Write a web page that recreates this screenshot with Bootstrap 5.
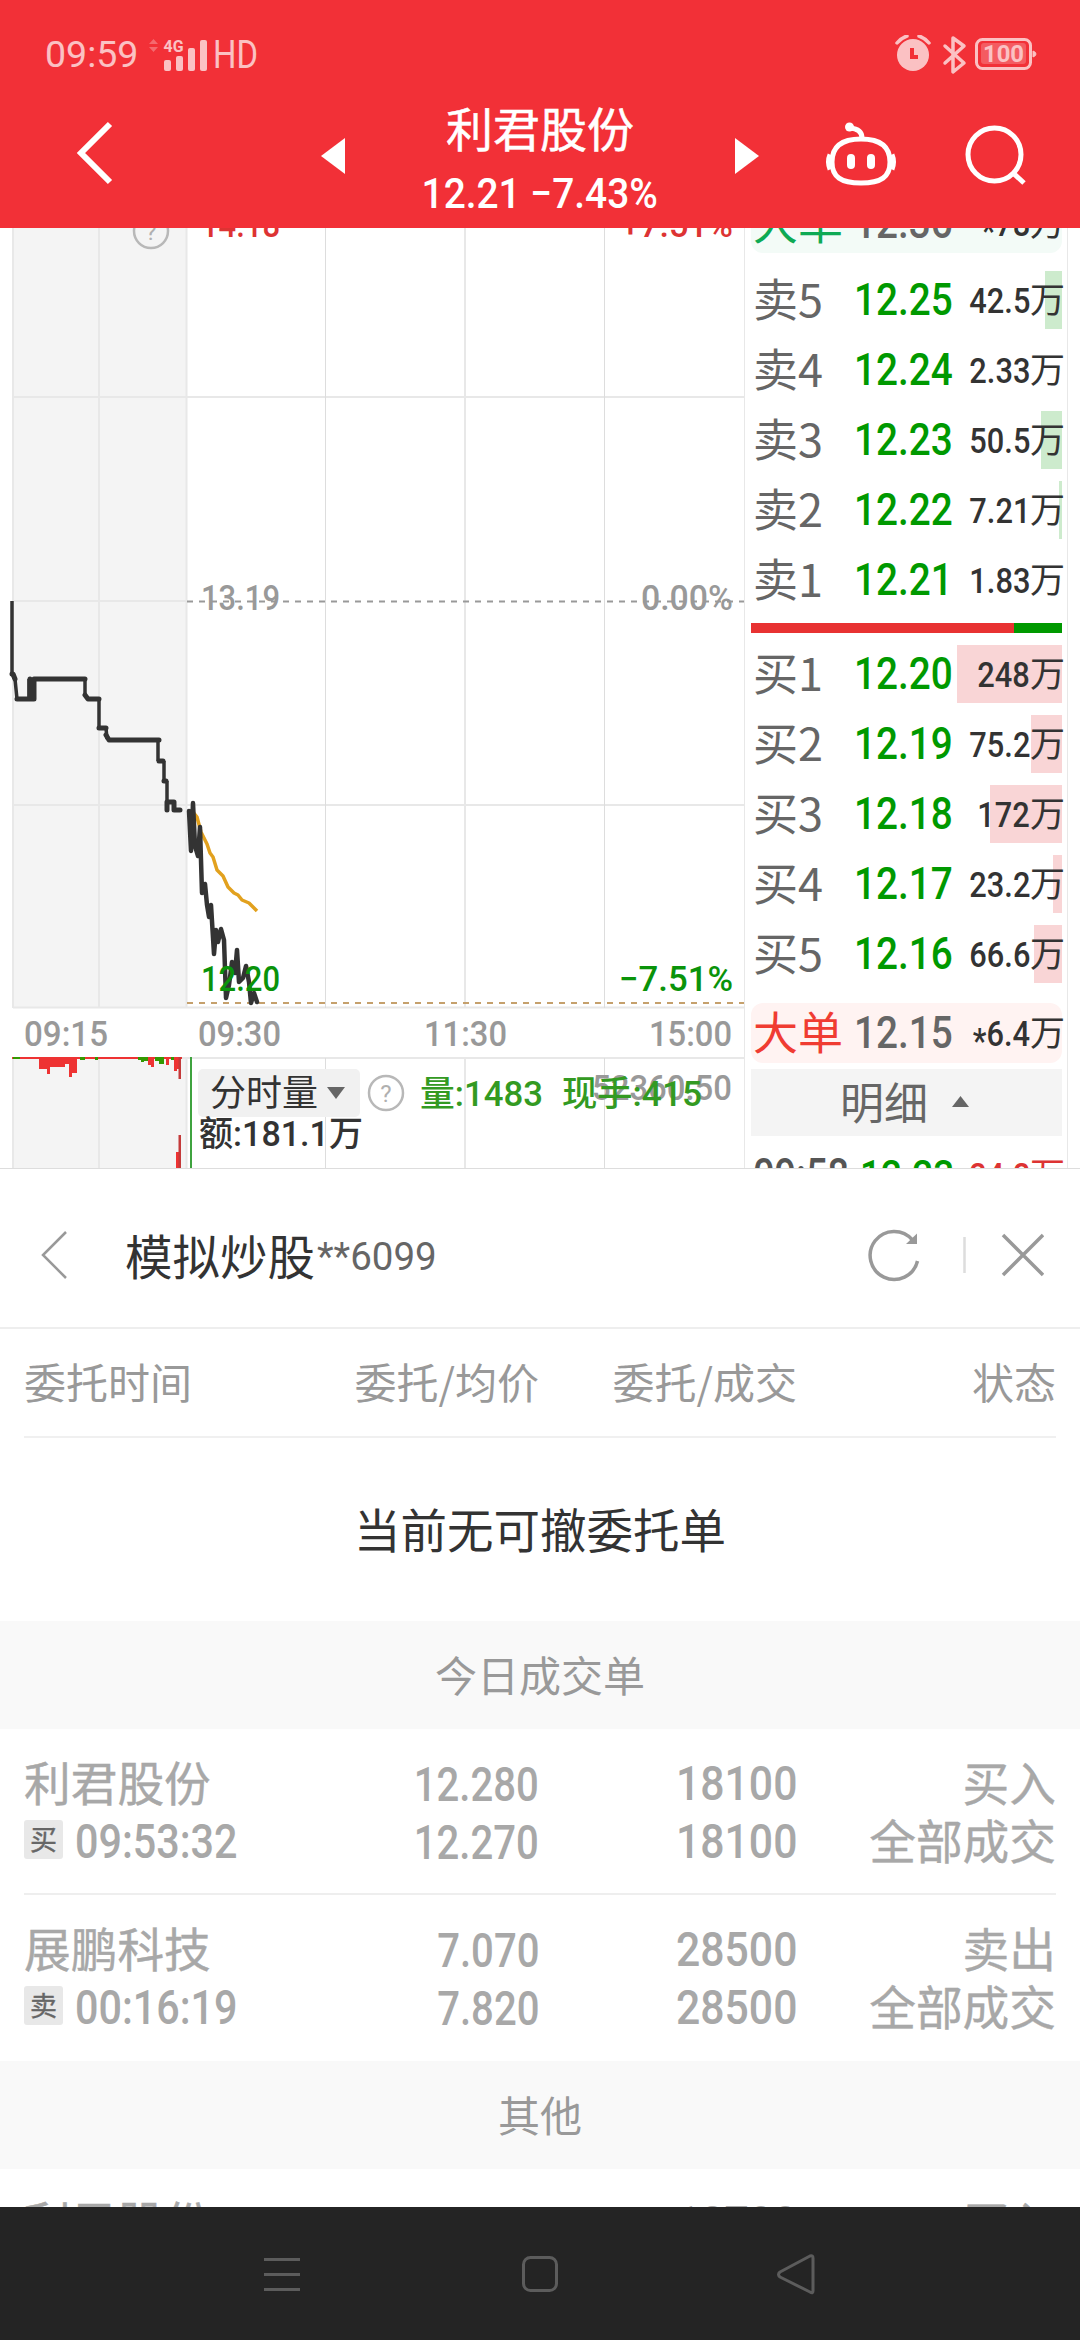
<!DOCTYPE html>
<html lang="zh-CN">
<head>
<meta charset="utf-8">
<meta name="viewport" content="width=device-width, initial-scale=1">
<title>利君股份</title>
<link href="https://cdn.jsdelivr.net/npm/bootstrap@5.3.0/dist/css/bootstrap.min.css" rel="stylesheet">
<style>
  body { width: 1080px; height: 2340px; overflow: hidden; background: #fff; color: #333;
    font-family: Roboto, "Noto Sans CJK SC", sans-serif; line-height: 1; }
  svg { display: block; flex: none; }
  .cn { font-family: "Noto Sans CJK SC", sans-serif; }
  .din { display: inline-block; font-weight: 500; transform: scaleX(.88); transform-origin: right; white-space: nowrap; }
  .din-start { transform-origin: left; }
  .app-head { height: 228px; background: #f23037; color: #fff; }
  .statusbar { height: 110px; padding: 0 43px 0 45px; opacity: .7; }
  .clock { font-size: 37.5px; }
  .titlebar { height: 118px; }
  .stock-name { font-size: 47px; height: 36px; line-height: 33px; -webkit-text-stroke: .5px; }
  .stock-quote { font-size: 42px; height: 30px; line-height: 30px; margin-top: 33px; }
  .stock-quote .din { transform: scaleX(.925); transform-origin: center; }
  .market { height: 941px; border-bottom: 1px solid #ddd; overflow: hidden; }
  .book { width: 324px; padding: 0 5px 0 6px; border-left: 1px solid #e8e8e8; border-right: 1px solid #e8e8e8; margin-left: -1px; }
  .lvl { height: 70px; padding-left: 2px; }
  .lvl-name { width: 101px; font-size: 45px; line-height: 54px; height: 58px; color: #666; white-space: nowrap; }
  .lvl-price { width: 97px; font-size: 45px; line-height: 58px; color: #090; }
  .lvl-price .din { transform: scaleX(.86); }
  .lvl-vol { height: 58px; line-height: 58px; padding-top: 2px; margin-right: -3px; font-size: 35px; color: #333; }
  .big { height: 60px; border-radius: 12px; flex: none; }
  .star { vertical-align: -7px; }
  .sellbar { background: linear-gradient(#cdebcd, #cdebcd) right 3px top 0 / var(--w) 100% no-repeat; }
  .buybar { background: linear-gradient(#f9d5d6, #f9d5d6) right 3px top 0 / var(--w) 100% no-repeat; }
  .detail { height: 67px; background: #f4f4f4; color: #666; font-size: 44px; padding-bottom: 4px; }
  .ratio { height: 10px; margin: 8px 0 6px; background: #090; }
  .panel-head { height: 160px; border-bottom: 2px solid #eee; padding: 14px 36px 0 40px; }
  .cols > :nth-child(1) { width: 330px; }
  .cols > :nth-child(2) { width: 185px; text-align: right; }
  .cols > :nth-child(3) { width: 258px; text-align: right; }
  .cols > :nth-child(4) { flex: 1; text-align: right; }
  .cols { margin: 0 24px; }
  .col-heads { height: 109px; border-bottom: 2px solid #f0f0f0; padding-bottom: 3px; font-size: 42px; color: #999; }
  .empty-msg { height: 183px; padding-bottom: 2px; font-size: 46.5px; color: #333; }
  .sect { height: 108px; padding-bottom: 2px; background: #f9f9f9; color: #999; font-size: 42px; }
  .deal { height: 166px; padding-top: 23px; color: #a8a8a8; font-size: 46.7px; }
  .deal .cn { -webkit-text-stroke: .4px; }
  .deal div > div { height: 58px; line-height: 58px; }
  .deal .din { font-size: 48px; transform: translateY(3px) scaleX(.89); }
  .deal .price .din { transform: translateY(4px) scaleX(.835); }
  .deal .time.din { transform: translateY(3px) scaleX(.86); }
  .side { width: 39px; height: 39px; background: #e8e8e8; color: #666; font-size: 27px; line-height: 37px; text-align: center; border-radius: 3px; margin-right: 12px; }
  .navkeys { height: 133px; background: #242424; }
</style>
<script src="https://cdn.jsdelivr.net/npm/bootstrap@5.3.0/dist/js/bootstrap.bundle.min.js"></script>
</head>
<body class="d-flex flex-column">
<header class="app-head flex-shrink-0">
  <div class="statusbar d-flex align-items-center justify-content-between">
    <div class="d-flex align-items-center">
      <span class="clock">09:59</span>
      <svg width="110" height="40" viewBox="149 35 110 40" fill="#fff" style="margin-left:11px">
        <path d="M149 44l4.500-5 4.500 5zM149 47h9l-4.500 5z" opacity=".4"/>
        <text x="163.500" y="51.500" font-size="16" font-weight="700" textLength="20" lengthAdjust="spacingAndGlyphs">4G</text>
        <rect x="164" y="60" width="7" height="11" rx="2"/><rect x="176" y="56" width="7" height="15" rx="2"/><rect x="188" y="48" width="7" height="23" rx="2"/><rect x="200" y="40" width="7" height="31" rx="2"/>
        <text x="213" y="68" font-size="38" textLength="45" lengthAdjust="spacingAndGlyphs">HD</text>
      </svg>
    </div>
    <svg width="145" height="40" viewBox="892 35 145 40" fill="none" stroke="#fff">
      <circle cx="913" cy="55" r="16" fill="#fff" stroke="none"/>
      <path d="M912 48v9h6" stroke="#f23037" stroke-width="4"/>
      <path d="M897 43q4-5 10-7M929 43q-4-5-10-7" stroke-width="3.500" stroke-linecap="round"/>
      <path d="M945 46l19 17-11 9V38l11 8-19 17" stroke-width="3.500" stroke-linejoin="round" stroke-linecap="round"/>
      <rect x="976.500" y="39.500" width="54" height="29" rx="6" stroke-width="3"/>
      <path d="M1033 51q3 1 3 3t-3 3z" fill="#fff" stroke-width="1"/>
      <rect x="981" y="43" width="45" height="21" rx="3" fill="#fff" opacity=".3" stroke="none"/>
      <text x="983" y="62" fill="#fff" stroke="none" font-size="24" font-weight="700" textLength="41" lengthAdjust="spacingAndGlyphs">100</text>
    </svg>
  </div>
  <div class="titlebar d-flex justify-content-between">
    <svg width="400" height="118" viewBox="0 110 400 118"><path d="M110 124L81 153l29 29" fill="none" stroke="#fff" stroke-width="6"/><path d="M345 138v36l-24-18z" fill="#fff"/></svg>
    <div class="text-center text-nowrap">
      <div class="stock-name cn">利君股份</div>
      <div class="stock-quote"><span class="din">12.21 −7.43%</span></div>
    </div>
    <svg width="400" height="118" viewBox="680 110 400 118" fill="none" stroke="#fff" stroke-width="5">
      <path d="M735 138v36l24-18z" fill="#fff" stroke="none"/>
      <path d="M861 139c21 0 29 9 29 23 0 15-9 21-29 21s-29-6-29-21c0-14 8-23 29-23z"/>
      <path d="M862 138q0-9-12-10"/><circle cx="849.500" cy="127" r="4.500" fill="#fff" stroke="none"/>
      <path d="M831 155q-3 7 0 14M891 155q3 7 0 14" stroke-width="7"/>
      <path d="M851 158v7M871 158v7" stroke-width="8" stroke-linecap="round"/>
      <circle cx="994.500" cy="154.500" r="26.500"/><path d="M1013 173l11 10"/>
    </svg>
  </div>
</header>

<section class="market d-flex flex-shrink-0">
  <svg width="745" height="940" viewBox="0 228 745 940" font-weight="500" font-size="35">
    <path fill="#f4f4f4" d="M13 228h174v780H13zM13 1058h174v110H13z"/>
    <path d="M13 228v780M99 228v780M186.500 228v780M465 228v780M13 1058v110M99 1058v110M186.500 1058v110M465 1058v110M13 397h731M13 601h174M13 805h731M13 1007.500h731M13 1058h731" stroke="#e8e8e8" stroke-width="2" fill="none"/>
    <path d="M325.500 228v780M604.500 228v780M325.500 1058v110M604.500 1058v110" stroke="#ddd"/>
    <path d="M187 601.500h557" stroke="#999" stroke-width="2" stroke-dasharray="6 6"/>
    <path d="M187 1003h557" stroke="#c5a06c" stroke-width="2" stroke-dasharray="6 6"/>
    <g fill="none" stroke="#b8b8b8" stroke-width="2.500"><circle cx="151" cy="231" r="17"/><circle cx="386" cy="1093" r="17"/></g>
    <g fill="#b0b0b0" font-size="24" font-weight="400" text-anchor="middle"><text x="151" y="240">?</text><text x="386" y="1102">?</text></g>
    <path d="M193 812l4 5 4 15 6 12 3 9 3 4 4 13 6 6 5 11 6 6 4 2 4 5 7 3 8 8" fill="none" stroke="#e2a11e" stroke-width="3.500" stroke-linejoin="round"/>
    <path d="M12 601v73l3 5 2 20M29 699v-20M34 699v-20M85 679v16M99 699v29M106 728l1 11M158 740v21M164 761v20M167 781v29M174 802v8" fill="none" stroke="#333" stroke-width="3.500"/>
    <path d="M12 674h1l2 5M17 699h15M30 679v20h4v-20h51M85 695l3 4h11M99 728h7M106 735l3 5h50M159 761h4M164 781h2M167 810v-8h7v8h6" fill="none" stroke="#333" stroke-width="5" stroke-linecap="round" stroke-linejoin="round"/>
    <path d="M189 811L191 851 193 803 195 846 198 856 200 827 202 893 205 884 207 905 209 917 211 905 214 954 216 930 218 942 221 929 224 940 226 998 229 985 232 962 235 973 237 950 239 982 243 978 246 966 249 982 251 1003 254 993 257 1002" fill="none" stroke="#333" stroke-width="4.500" stroke-linecap="round" stroke-linejoin="round"/>
    <path fill="#e33" d="M12 1057h170v2H12zM39 1057h8v12h-8zM47 1057h3v17h-3zM50 1057h15v10H50zM65 1057h4v7h-4zM69 1057h3v20h-3zM72 1057h5v16h-5zM148 1057h3v8h-3zM151 1057h3v10h-3zM166 1057h3v8h-3zM174 1057h3v14h-3zM177 1057h2v12h-2z"/>
    <path fill="#e33" d="M176 1152h3v16h-3z"/>
    <path fill="#c43a3a" d="M178.500 1057h2.500v22h-2.500zM178.500 1135h2.500v33h-2.500z"/>
    <path d="M13 1057h7v2h-7zM80 1057h5v3h-5zM95 1057h3v3h-3zM138 1057h4v3h-4zM141 1057h3v5h-3zM144 1057h4v4h-4zM155 1057h5v4h-5zM159 1057h5v7h-5zM171 1057h3v3h-3z" fill="#390"/>
    <path d="M191 1057v111" stroke="#3fa33f" stroke-width="2"/>
    <g fill="#999">
      <text x="201" y="610" textLength="79" lengthAdjust="spacingAndGlyphs">13.19</text>
      <text x="641" y="610" textLength="92" lengthAdjust="spacingAndGlyphs">0.00%</text>
      <text x="24" y="1046" textLength="84" lengthAdjust="spacingAndGlyphs">09:15</text>
      <text x="198" y="1046" textLength="83" lengthAdjust="spacingAndGlyphs">09:30</text>
      <text x="424" y="1046" textLength="83" lengthAdjust="spacingAndGlyphs">11:30</text>
      <text x="649" y="1046" textLength="83" lengthAdjust="spacingAndGlyphs">15:00</text>
      <text x="592" y="1099.500" textLength="140" lengthAdjust="spacingAndGlyphs">52360.50</text>
    </g>
    <g fill="#d33"><text x="201" y="237" textLength="79" lengthAdjust="spacingAndGlyphs">14.18</text><text x="621" y="237" textLength="112" lengthAdjust="spacingAndGlyphs">+7.51%</text></g>
    <g fill="#0a930a"><text x="201" y="991" textLength="79" lengthAdjust="spacingAndGlyphs">12.20</text><text x="619" y="991" textLength="114" lengthAdjust="spacingAndGlyphs">−7.51%</text></g>
    <rect x="198" y="1069" width="162" height="48" rx="5" fill="#f1f1f1"/>
    <path d="M327 1087h18l-9 12z" fill="#666"/>
    <g fill="#333"><text x="210" y="1106" font-size="36" font-weight="400" textLength="108">分时量</text><text x="199" y="1146" textLength="164" lengthAdjust="spacingAndGlyphs">额:181.1万</text></g>
    <g fill="#339a22"><text x="420" y="1106" textLength="123" lengthAdjust="spacingAndGlyphs">量:1483</text><text x="562" y="1106" textLength="140" lengthAdjust="spacingAndGlyphs">现手:415</text></g>
  </svg>
  <aside class="book d-flex flex-column overflow-hidden">
    <div class="lvl big d-flex align-items-center" style="background:#f3fbf7;margin:-35px 0 12px"><span class="lvl-name cn" style="color:#0eaa54">大单</span><span class="lvl-price" style="color:#666"><span class="din din-start">12.36</span></span><span class="lvl-vol flex-fill text-end text-nowrap"><span class="din"><span class="star">*</span>78</span>万</span></div>
    <div class="lvl d-flex align-items-center flex-shrink-0"><span class="lvl-name cn">卖5</span><span class="lvl-price"><span class="din din-start">12.25</span></span><span class="lvl-vol flex-fill text-end text-nowrap sellbar" style="--w:17px"><span class="din">42.5</span>万</span></div>
    <div class="lvl d-flex align-items-center flex-shrink-0"><span class="lvl-name cn">卖4</span><span class="lvl-price"><span class="din din-start">12.24</span></span><span class="lvl-vol flex-fill text-end text-nowrap"><span class="din">2.33</span>万</span></div>
    <div class="lvl d-flex align-items-center flex-shrink-0"><span class="lvl-name cn">卖3</span><span class="lvl-price"><span class="din din-start">12.23</span></span><span class="lvl-vol flex-fill text-end text-nowrap sellbar" style="--w:21px"><span class="din">50.5</span>万</span></div>
    <div class="lvl d-flex align-items-center flex-shrink-0"><span class="lvl-name cn">卖2</span><span class="lvl-price"><span class="din din-start">12.22</span></span><span class="lvl-vol flex-fill text-end text-nowrap sellbar" style="--w:3px"><span class="din">7.21</span>万</span></div>
    <div class="lvl d-flex align-items-center flex-shrink-0"><span class="lvl-name cn">卖1</span><span class="lvl-price"><span class="din din-start">12.21</span></span><span class="lvl-vol flex-fill text-end text-nowrap"><span class="din">1.83</span>万</span></div>
    <div class="ratio flex-shrink-0"><div class="h-100" style="width:84.6%;background:#e83232"></div></div>
    <div class="lvl d-flex align-items-center flex-shrink-0"><span class="lvl-name cn">买1</span><span class="lvl-price"><span class="din din-start">12.20</span></span><span class="lvl-vol flex-fill text-end text-nowrap buybar" style="--w:105px"><span class="din">248</span>万</span></div>
    <div class="lvl d-flex align-items-center flex-shrink-0"><span class="lvl-name cn">买2</span><span class="lvl-price"><span class="din din-start">12.19</span></span><span class="lvl-vol flex-fill text-end text-nowrap buybar" style="--w:31px"><span class="din">75.2</span>万</span></div>
    <div class="lvl d-flex align-items-center flex-shrink-0"><span class="lvl-name cn">买3</span><span class="lvl-price"><span class="din din-start">12.18</span></span><span class="lvl-vol flex-fill text-end text-nowrap buybar" style="--w:72px"><span class="din">172</span>万</span></div>
    <div class="lvl d-flex align-items-center flex-shrink-0"><span class="lvl-name cn">买4</span><span class="lvl-price"><span class="din din-start">12.17</span></span><span class="lvl-vol flex-fill text-end text-nowrap buybar" style="--w:9px"><span class="din">23.2</span>万</span></div>
    <div class="lvl d-flex align-items-center flex-shrink-0"><span class="lvl-name cn">买5</span><span class="lvl-price"><span class="din din-start">12.16</span></span><span class="lvl-vol flex-fill text-end text-nowrap buybar" style="--w:28px"><span class="din">66.6</span>万</span></div>
    <div class="lvl big d-flex align-items-center" style="background:#fff3f2;margin:14px 0 6px"><span class="lvl-name cn" style="color:#f03c32">大单</span><span class="lvl-price" style="color:#666"><span class="din din-start">12.15</span></span><span class="lvl-vol flex-fill text-end text-nowrap"><span class="din"><span class="star">*</span>6.4</span>万</span></div>
    <div class="detail cn d-flex align-items-center justify-content-center flex-shrink-0"><span>明细</span><svg width="17" height="12" style="margin:3px 4px 0 24px"><path d="M0 11L8.500 0 17 11z" fill="#666"/></svg></div>
    <div class="lvl d-flex align-items-center flex-shrink-0 mt-1"><span class="lvl-price" style="width:107px;font-size:44px;color:#555"><span class="din din-start">09:58</span></span><span class="lvl-price" style="width:91px;font-size:43px"><span class="din din-start">12.23</span></span><span class="lvl-vol flex-fill text-end text-nowrap" style="color:#d33"><span class="din">24.2</span>万</span></div>
  </aside>
</section>

<main class="flex-fill overflow-hidden">
  <div class="panel-head d-flex align-items-center">
    <svg width="28" height="50" viewBox="40 1230 28 50"><path d="M66 1232l-23 23 23 23" fill="none" stroke="#999" stroke-width="2.500"/></svg>
    <span class="cn text-nowrap" style="font-size:47.500px;margin-left:57px">模拟炒股</span><span class="text-nowrap" style="font-size:38.500px;color:#666;margin:5px 0 0 2px">**6099</span>
    <svg class="ms-auto" width="180" height="60" viewBox="864 1226 180 60" fill="none" stroke="#999" stroke-width="3.500">
      <path d="M917.500 1262a24 24 0 1 1-5-21"/><path d="M917 1234.500v10.500h-11z" fill="#999" stroke="none"/>
      <path d="M964.500 1238v36" stroke="#ddd" stroke-width="2.500"/><path d="M1003 1236l40 40M1043 1236l-40 40"/>
    </svg>
  </div>
  <div class="cols col-heads cn d-flex align-items-center"><div>委托时间</div><div>委托/均价</div><div>委托/成交</div><div>状态</div></div>
  <div class="empty-msg cn d-flex align-items-center justify-content-center">当前无可撤委托单</div>
  <div class="sect cn d-flex align-items-center justify-content-center">今日成交单</div>
  <div class="cols deal d-flex" style="border-bottom:2px solid #eee">
    <div><div class="cn">利君股份</div><div class="d-flex align-items-center"><span class="side cn">买</span><span class="din din-start time">09:53:32</span></div></div>
    <div class="price"><div><span class="din">12.280</span></div><div><span class="din">12.270</span></div></div>
    <div><div><span class="din">18100</span></div><div><span class="din">18100</span></div></div>
    <div class="cn"><div>买入</div><div>全部成交</div></div>
  </div>
  <div class="cols deal d-flex">
    <div><div class="cn">展鹏科技</div><div class="d-flex align-items-center"><span class="side cn">卖</span><span class="din din-start time">00:16:19</span></div></div>
    <div class="price"><div><span class="din">7.070</span></div><div><span class="din">7.820</span></div></div>
    <div><div><span class="din">28500</span></div><div><span class="din">28500</span></div></div>
    <div class="cn"><div>卖出</div><div>全部成交</div></div>
  </div>
  <div class="sect cn d-flex align-items-center justify-content-center">其他</div>
  <div class="cols deal d-flex">
    <div><div class="cn">利君股份</div></div>
    <div class="price"><div><span class="din">7.070</span></div></div>
    <div><div><span class="din">18700</span></div></div>
    <div class="cn"><div>买入</div></div>
  </div>
</main>

<nav class="navkeys flex-shrink-0">
  <svg width="1080" height="133" viewBox="0 2207 1080 133" fill="none" stroke="#5c5c5c" stroke-width="3" stroke-linejoin="round">
    <path d="M264 2259.500h36M264 2274.500h36M264 2289.500h36"/><rect x="523.500" y="2257.500" width="33" height="33" rx="7"/><path d="M810 2256q3-1 3 2v33q0 3-3 1l-30-15q-3-2.500 0-5z"/>
  </svg>
</nav>
</body>
</html>
